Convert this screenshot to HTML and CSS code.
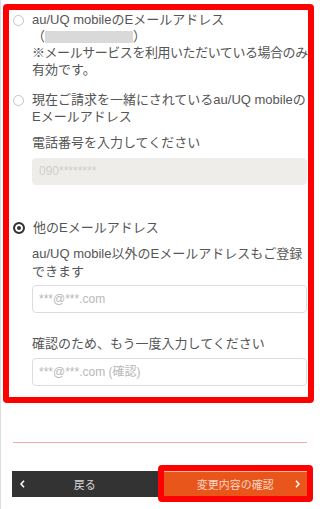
FILE: index.html
```html
<!DOCTYPE html>
<html lang="ja">
<head>
    <meta charset="UTF-8">
    <meta name="viewport" content="width=device-width, initial-scale=1.0">
    <title>Eメールアドレス変更</title>
    <link rel="stylesheet" href="styles.css">
</head>
<body>
    <div class="form-box">
        <div class="choice">
            <span class="radio"></span>
            <p class="choice-text">au/UQ mobileのEメールアドレス<br>（<span class="masked"></span>）<br><span class="note-line">※メールサービスを利用いただいている場合のみ</span><br>有効です。</p>
        </div>
        <div class="choice choice-current">
            <span class="radio"></span>
            <p class="choice-text">現在ご請求を一緒にされているau/UQ mobileのEメールアドレス</p>
        </div>
        <div class="sub-field">
            <label class="field-label label-phone" for="phone">電話番号を入力してください</label>
            <input class="field-input is-disabled" type="tel" id="phone" placeholder="090********" disabled>
        </div>
        <div class="choice choice-other">
            <span class="radio is-checked"></span>
            <p class="choice-text">他のEメールアドレス</p>
        </div>
        <div class="sub-field">
            <p class="field-note">au/UQ mobile以外のEメールアドレスもご登録できます</p>
            <input class="field-input" type="email" id="email" placeholder="***@***.com">
            <label class="field-label label-confirm" for="email-confirm">確認のため、もう一度入力してください</label>
            <input class="field-input" type="email" id="email-confirm" placeholder="***@***.com (確認)">
        </div>
    </div>

    <div class="divider"></div>

    <div class="actions">
        <a class="btn btn-back" href="#">
            <svg class="chevron" width="5" height="8" viewBox="0 0 5 8"><polyline points="4,0.8 1,4 4,7.2" fill="none" stroke="#fff" stroke-width="1.6"/></svg>
            <span class="btn-label">戻る</span>
        </a>
        <a class="btn btn-next" href="#">
            <span class="btn-label">変更内容の確認</span>
            <svg class="chevron" width="5" height="8" viewBox="0 0 5 8"><polyline points="1,0.8 4,4 1,7.2" fill="none" stroke="#fff" stroke-width="1.6"/></svg>
        </a>
    </div>
</body>
</html>
```

FILE: styles.css
```css
body {
    font-family: 'Liberation Sans', 'Noto Sans CJK JP', sans-serif;
    font-size: 13px;
    color: #555;
    background-color: #fff;
    margin: 0;
    padding-top: 4px;
    border-left: 1px solid #ddd;
    min-height: 505px;
}
p {
    margin: 0;
}
.form-box {
    margin: 0 6px 0 2px;
    padding: 2px 1px 11px 4px;
    border: 6px solid #ff0000;
    border-radius: 4px;
    line-height: 16.5px;
}
.choice {
    display: flex;
    align-items: flex-start;
    gap: 8px;
}
.choice-current {
    margin-top: 14px;
}
.choice-other {
    margin-top: 35px;
}
.radio {
    flex: none;
    width: 11px;
    height: 11px;
    margin-top: 3px;
    box-sizing: border-box;
    border: 1px solid #c4c4c4;
    border-radius: 50%;
    background-color: #fff;
}
.radio.is-checked {
    width: 12px;
    height: 12px;
    margin-top: 2px;
    border: 2px solid #333;
    background-color: #333;
    box-shadow: inset 0 0 0 2px #fff;
}
.choice-text {
    flex: 1;
    margin-right: -4px;
}
.note-line {
    white-space: nowrap;
    letter-spacing: -0.45px;
}
.masked {
    display: inline-block;
    width: 88px;
    height: 12px;
    vertical-align: -2px;
    background-color: #d9d9d9;
    border-radius: 1px;
}
.sub-field {
    margin-left: 19px;
}
.field-label {
    display: block;
}
.label-phone {
    margin-top: 10px;
    margin-bottom: 6px;
}
.label-confirm {
    margin-top: 23px;
    margin-bottom: 5px;
}
.field-note {
    margin-top: 9px;
    margin-bottom: 4px;
    margin-right: -4px;
    line-height: 18px;
}
.field-input {
    display: block;
    width: 100%;
    height: 28px;
    box-sizing: border-box;
    margin: 0;
    padding: 0 6px;
    border: 1px solid #dcdcdc;
    border-radius: 4px;
    background-color: #fff;
    font-family: 'Liberation Sans', 'Noto Sans CJK JP', sans-serif;
    font-size: 12px;
    color: #555;
}
.field-input::placeholder {
    color: #b8b8b8;
}
.field-input.is-disabled {
    height: 27px;
    border-color: #eeede9;
    background-color: #eeede9;
}
.field-input.is-disabled::placeholder {
    color: #cfcfcf;
}
.divider {
    margin: 39px 13px 0 12px;
    height: 1px;
    background-color: #f5a6a6;
}
.actions {
    display: flex;
    gap: 6px;
    margin: 28px 13px 0 11px;
}
.btn {
    flex: 1;
    position: relative;
    display: grid;
    grid-template-columns: 10px 1fr 10px;
    align-items: center;
    height: 26px;
    box-sizing: border-box;
    padding: 0 8px;
    font-size: 11px;
    text-decoration: none;
}
.btn-back {
    background-color: #333;
    color: #d6d6d6;
}
.btn-back .btn-label {
    grid-column: 2;
    text-align: center;
}
.btn-back .chevron {
    grid-column: 1;
    grid-row: 1;
}
.btn-next {
    padding: 0 7px;
    background-color: #e8561b;
    color: #fbd7c6;
    border-top: 1px solid #f7b99c;
    border-bottom: 1px solid #f7b99c;
}
.btn-next .btn-label {
    grid-column: 2;
    text-align: center;
}
.btn-next .chevron {
    grid-column: 3;
    justify-self: end;
}
/* annotation frame over the confirm button */
.btn-next::after {
    content: '';
    position: absolute;
    inset: -7px -6px -6px -6px;
    border: 6px solid #ff0000;
    border-radius: 4px;
}
```
